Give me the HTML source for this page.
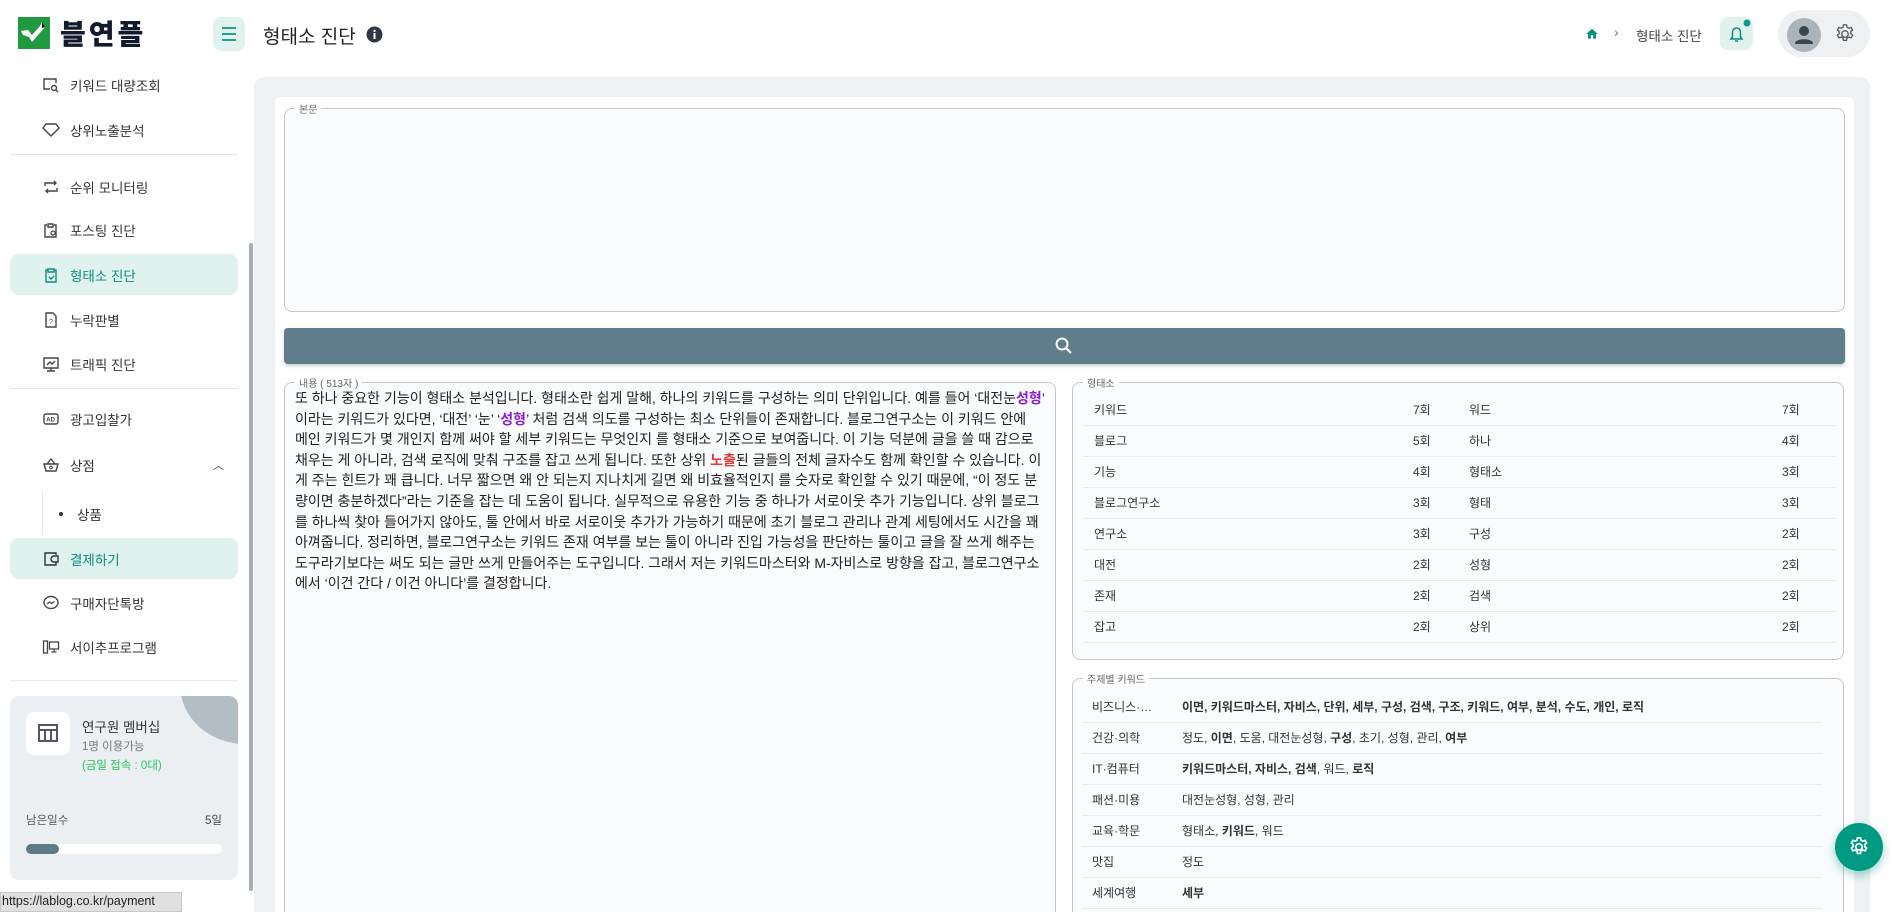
<!DOCTYPE html>
<html style="width:1890px;height:912px;overflow:hidden"><head><meta charset="utf-8">
<style>
*{box-sizing:border-box;margin:0;padding:0}
body{width:1890px;height:912px;overflow:hidden;background:#fff;font-family:"Liberation Sans","Noto Sans CJK KR",sans-serif;color:#222;position:relative}
.abs{position:absolute}
.nav{position:absolute;left:10px;width:228px;height:41px;display:flex;align-items:center;font-size:13.5px;color:#333;border-radius:9px}
.nav svg{position:absolute;left:32px;top:50%;transform:translateY(-50%)}
.nav span{position:absolute;left:60px}
.nav.act{background:#dff2ee;color:#0d8c7c}
.div{position:absolute;left:10px;width:228px;height:1px;background:#e6e8ea}
fieldset{position:absolute;border:1px solid #c4c7ca;border-radius:8px;background:#fafbfc}
legend{font-size:10px;color:#666;margin-left:10px;padding:0 4px}
.row{position:absolute;height:31px;border-bottom:1px solid #e8eaec;font-size:12px;color:#333;line-height:30px}
.txt{position:absolute;left:10px;top:-2px;font-size:14px;line-height:20.6px;color:#222;white-space:nowrap}
b{font-weight:700}
</style></head><body>
<div class="abs" style="left:18px;top:17px;width:32px;height:32px;background:#1f9a3e">
<svg width="32" height="32" viewBox="0 0 32 32"><path d="M3 14 L10 13 L14 18 L22 9 L24 5 L27 10 L21 17 L14 25 L11 20 L5 18Z" fill="#fff"/><path d="M24 5 L27 10 L24 11Z" fill="#111"/></svg></div>
<div class="abs" style="left:60px;top:13px;font-size:28px;font-weight:900;color:#121a2e;letter-spacing:3px">블연플</div>
<div class="abs" style="left:213px;top:17px;width:32px;height:34px;background:#dff2ee;border-radius:8px">
<svg width="32" height="34"><path d="M9 11h14M9 17h14M9 23h14" stroke="#2a9d8f" stroke-width="2"/></svg></div>
<div class="abs" style="left:263px;top:22px;font-size:19px;color:#222">형태소 진단</div>
<svg class="abs" style="left:366px;top:26px" width="17" height="17"><circle cx="8.5" cy="8.5" r="8" fill="#2d3748"/><rect x="7.5" y="7" width="2" height="6" fill="#fff"/><circle cx="8.5" cy="4.8" r="1.2" fill="#fff"/></svg>
<svg class="abs" style="left:1585px;top:27px" width="14" height="14" viewBox="0 0 24 24"><path d="M10 20v-6h4v6h5v-8h3L12 3 2 12h3v8z" fill="#0d8c7c"/></svg>
<div class="abs" style="left:1614px;top:24px;font-size:14px;color:#777">›</div>
<div class="abs" style="left:1636px;top:25px;font-size:13.5px;color:#444">형태소 진단</div>
<div class="abs" style="left:1720px;top:17px;width:33px;height:33px;background:#dff2ee;border-radius:8px">
<svg width="33" height="33" viewBox="0 0 33 33"><path d="M11 22h11l-1.5-2v-5a4 4 0 0 0-8 0v5z M15 24h3" fill="none" stroke="#0d8c7c" stroke-width="1.5"/><circle cx="27" cy="6" r="3.5" fill="#0d9a84"/></svg></div>
<div class="abs" style="left:1778px;top:10px;width:92px;height:47px;background:#eef0f2;border-radius:24px"></div>
<svg class="abs" style="left:1787px;top:18px" width="34" height="34"><circle cx="17" cy="17" r="17" fill="#aab4bb"/><circle cx="17" cy="13" r="5" fill="#3c4650"/><path d="M8 25c1-5 17-5 18 0v1H8z" fill="#3c4650"/></svg>
<svg class="abs" style="left:1834px;top:23px" width="22" height="22" viewBox="0 0 24 24"><path d="M12 8.5a3.5 3.5 0 1 0 0 7 3.5 3.5 0 0 0 0-7z M10.3 2h3.4l.5 2.6 1.9 1.1 2.5-.9 1.7 2.9-2 1.7v2.2l2 1.7-1.7 2.9-2.5-.9-1.9 1.1-.5 2.6h-3.4l-.5-2.6-1.9-1.1-2.5.9-1.7-2.9 2-1.7V9.4l-2-1.7 1.7-2.9 2.5.9 1.9-1.1z" fill="none" stroke="#555" stroke-width="1.4"/></svg>
<div class="nav" style="top:64px"><svg width="18" height="18" viewBox="0 0 18 18"><path d="M14 7V3H2v10h6" fill="none" stroke="#444" stroke-width="1.4"/><circle cx="12" cy="12" r="2.5" fill="none" stroke="#444" stroke-width="1.4"/><path d="M14 14l2 2" stroke="#444" stroke-width="1.4"/></svg><span>키워드 대량조회</span></div>
<div class="nav" style="top:109px"><svg width="18" height="18" viewBox="0 0 18 18"><path d="M4 3h10l3 4-8 8-8-8z" fill="none" stroke="#444" stroke-width="1.4"/></svg><span>상위노출분석</span></div>
<div class="div" style="top:154px"></div>
<div class="nav" style="top:166px"><svg width="18" height="18" viewBox="0 0 18 18"><path d="M3 8V5h11M12 3l2 2-2 2M15 10v3H4M6 15l-2-2 2-2" fill="none" stroke="#444" stroke-width="1.4"/></svg><span>순위 모니터링</span></div>
<div class="nav" style="top:209px"><svg width="18" height="18" viewBox="0 0 18 18"><path d="M12 4h2v12H3V4h2M6 3h5v3H6z" fill="none" stroke="#444" stroke-width="1.4"/><circle cx="11" cy="12" r="2" fill="none" stroke="#444" stroke-width="1.2"/></svg><span>포스팅 진단</span></div>
<div class="nav act" style="top:254px"><svg width="18" height="18" viewBox="0 0 18 18"><path d="M12 4h2v12H4V4h2M6 3h6v3H6zM7 11l2 2 3-3" fill="none" stroke="#0d8c7c" stroke-width="1.4"/></svg><span>형태소 진단</span></div>
<div class="nav" style="top:299px"><svg width="18" height="18" viewBox="0 0 18 18"><path d="M4 2h7l3 3v11H4z" fill="none" stroke="#444" stroke-width="1.4"/><text x="7" y="13" font-size="7" fill="#444">?</text></svg><span>누락판별</span></div>
<div class="nav" style="top:343px"><svg width="18" height="18" viewBox="0 0 18 18"><path d="M2 3h14v10H2zM5 16h8M9 13v3M5 10l3-3 2 2 3-3" fill="none" stroke="#444" stroke-width="1.4"/></svg><span>트래픽 진단</span></div>
<div class="div" style="top:388px"></div>
<div class="nav" style="top:398px"><svg width="18" height="18" viewBox="0 0 18 18"><rect x="2" y="4" width="14" height="10" rx="2" fill="none" stroke="#444" stroke-width="1.4"/><text x="4.3" y="11.5" font-size="6" font-weight="700" fill="#444">AD</text></svg><span>광고입찰가</span></div>
<div class="nav" style="top:444px"><svg width="18" height="18" viewBox="0 0 18 18"><path d="M2 8h14l-2 7H4zM5 8l4-5 4 5" fill="none" stroke="#444" stroke-width="1.4"/><circle cx="9" cy="11.5" r="1.3" fill="none" stroke="#444"/></svg><span>상점</span><span style="left:203px;font-size:11px">︿</span></div>
<div class="abs" style="left:42px;top:492px;width:1px;height:42px;background:#e3e5e7"></div>
<div class="abs" style="left:59px;top:512px;width:4px;height:4px;border-radius:2px;background:#333"></div>
<div class="abs" style="left:77px;top:504px;font-size:13.5px;color:#333">상품</div>
<div class="nav act" style="top:538px"><svg width="18" height="18" viewBox="0 0 18 18"><path d="M14 5V3H3v12h11v-3M14 6h2v6h-4a3 3 0 0 1 0-6z" fill="none" stroke="#333" stroke-width="1.4"/></svg><span>결제하기</span></div>
<div class="nav" style="top:582px"><svg width="18" height="18" viewBox="0 0 18 18"><ellipse cx="9" cy="8.5" rx="7" ry="6" fill="none" stroke="#444" stroke-width="1.4"/><path d="M5 10l2.5-2 2 1.5 3-2" fill="none" stroke="#444" stroke-width="1.2"/></svg><span>구매자단톡방</span></div>
<div class="nav" style="top:626px"><svg width="18" height="18" viewBox="0 0 18 18"><rect x="1.5" y="3" width="4" height="12" fill="none" stroke="#444" stroke-width="1.3"/><rect x="7.5" y="4" width="9" height="7" fill="none" stroke="#444" stroke-width="1.3"/><path d="M12 11v3M9.5 14h5" stroke="#444" stroke-width="1.3"/></svg><span>서이추프로그램</span></div>
<div class="div" style="top:680px"></div>
<div class="abs" style="left:10px;top:696px;width:228px;height:184px;background:#eceff1;border-radius:9px;overflow:hidden">
<div class="abs" style="left:170px;top:-70px;width:130px;height:118px;border-radius:50%;background:#b2bec3"></div>
<div class="abs" style="left:16px;top:16px;width:44px;height:43px;background:#fff;border-radius:8px"><svg width="44" height="43"><rect x="13" y="13" width="18" height="16" fill="none" stroke="#556" stroke-width="2"/><path d="M13 18h18M19 18v11M25 18v11" stroke="#556" stroke-width="2"/></svg></div>
<div class="abs" style="left:72px;top:20px;font-size:13.5px;color:#333">연구원 멤버십</div>
<div class="abs" style="left:72px;top:42px;font-size:11.5px;color:#777">1명 이용가능</div>
<div class="abs" style="left:72px;top:61px;font-size:11.5px;color:#22c55e">(금일 접속 : 0대)</div>
<div class="abs" style="left:16px;top:116px;font-size:11.5px;color:#555">남은일수</div>
<div class="abs" style="left:195px;top:116px;font-size:11.5px;color:#444">5일</div>
<div class="abs" style="left:16px;top:148px;width:196px;height:10px;background:#fff;border-radius:5px"><div style="width:33px;height:10px;background:#5d7a89;border-radius:5px"></div></div>
</div>
<div class="abs" style="left:249px;top:243px;width:4px;height:648px;background:#a7adb2;border-radius:2px"></div>
<div class="abs" style="left:0;top:892px;width:182px;height:20px;background:#e0e0e0;border:1px solid #c8c8c8;font-size:12.5px;color:#222;padding:1px 0 0 1px">https://lablog.co.kr/payment</div>
<div class="abs" style="left:254px;top:77px;width:1616px;height:835px;background:#eef0f2;border-radius:10px 10px 0 0"></div>
<div class="abs" style="left:275px;top:97px;width:1579px;height:815px;background:#fff;border-radius:6px 6px 0 0"></div>
<fieldset style="left:284px;top:101px;width:1561px;height:211px"><legend>본문</legend></fieldset>
<div class="abs" style="left:284px;top:328px;width:1561px;height:36px;background:#607d8b;border-radius:4px;box-shadow:0 2px 3px rgba(0,0,0,.2)">
<svg class="abs" style="left:770px;top:8px" width="20" height="20" viewBox="0 0 20 20"><circle cx="8" cy="8" r="5.5" fill="none" stroke="#fff" stroke-width="2"/><path d="M12 12l5 5" stroke="#fff" stroke-width="2.2"/></svg></div>
<fieldset style="left:284px;top:375px;width:772px;height:560px"><legend>내용 ( 513자 )</legend>
<div class="txt">또 하나 중요한 기능이 형태소 분석입니다. 형태소란 쉽게 말해, 하나의 키워드를 구성하는 의미 단위입니다. 예를 들어 ‘대전눈<b style="color:#8b1bd6">성형</b>’<br>이라는 키워드가 있다면, ‘대전’ ‘눈’ ‘<b style="color:#8b1bd6">성형</b>’ 처럼 검색 의도를 구성하는 최소 단위들이 존재합니다. 블로그연구소는 이 키워드 안에<br>메인 키워드가 몇 개인지 함께 써야 할 세부 키워드는 무엇인지 를 형태소 기준으로 보여줍니다. 이 기능 덕분에 글을 쓸 때 감으로<br>채우는 게 아니라, 검색 로직에 맞춰 구조를 잡고 쓰게 됩니다. 또한 상위 <b style="color:#e53935">노출</b>된 글들의 전체 글자수도 함께 확인할 수 있습니다. 이<br>게 주는 힌트가 꽤 큽니다. 너무 짧으면 왜 안 되는지 지나치게 길면 왜 비효율적인지 를 숫자로 확인할 수 있기 때문에, “이 정도 분<br>량이면 충분하겠다”라는 기준을 잡는 데 도움이 됩니다. 실무적으로 유용한 기능 중 하나가 서로이웃 추가 기능입니다. 상위 블로그<br>를 하나씩 찾아 들어가지 않아도, 툴 안에서 바로 서로이웃 추가가 가능하기 때문에 초기 블로그 관리나 관계 세팅에서도 시간을 꽤<br>아껴줍니다. 정리하면, 블로그연구소는 키워드 존재 여부를 보는 툴이 아니라 진입 가능성을 판단하는 툴이고 글을 잘 쓰게 해주는<br>도구라기보다는 써도 되는 글만 쓰게 만들어주는 도구입니다. 그래서 저는 키워드마스터와 M-자비스로 방향을 잡고, 블로그연구소<br>에서 ‘이건 간다 / 이건 아니다’를 결정합니다.</div>
</fieldset>
<fieldset style="left:1072px;top:375px;width:772px;height:285px"><legend>형태소</legend></fieldset>
<fieldset style="left:1072px;top:671px;width:772px;height:270px"><legend>주제별 키워드</legend></fieldset>
<div class="row" style="left:1083px;top:395px;width:752px"><span style="position:absolute;left:11px">키워드</span><span style="position:absolute;left:330px">7회</span><span style="position:absolute;left:386px">워드</span><span style="position:absolute;left:699px">7회</span></div>
<div class="row" style="left:1083px;top:426px;width:752px"><span style="position:absolute;left:11px">블로그</span><span style="position:absolute;left:330px">5회</span><span style="position:absolute;left:386px">하나</span><span style="position:absolute;left:699px">4회</span></div>
<div class="row" style="left:1083px;top:457px;width:752px"><span style="position:absolute;left:11px">기능</span><span style="position:absolute;left:330px">4회</span><span style="position:absolute;left:386px">형태소</span><span style="position:absolute;left:699px">3회</span></div>
<div class="row" style="left:1083px;top:488px;width:752px"><span style="position:absolute;left:11px">블로그연구소</span><span style="position:absolute;left:330px">3회</span><span style="position:absolute;left:386px">형태</span><span style="position:absolute;left:699px">3회</span></div>
<div class="row" style="left:1083px;top:519px;width:752px"><span style="position:absolute;left:11px">연구소</span><span style="position:absolute;left:330px">3회</span><span style="position:absolute;left:386px">구성</span><span style="position:absolute;left:699px">2회</span></div>
<div class="row" style="left:1083px;top:550px;width:752px"><span style="position:absolute;left:11px">대전</span><span style="position:absolute;left:330px">2회</span><span style="position:absolute;left:386px">성형</span><span style="position:absolute;left:699px">2회</span></div>
<div class="row" style="left:1083px;top:581px;width:752px"><span style="position:absolute;left:11px">존재</span><span style="position:absolute;left:330px">2회</span><span style="position:absolute;left:386px">검색</span><span style="position:absolute;left:699px">2회</span></div>
<div class="row" style="left:1083px;top:612px;width:752px"><span style="position:absolute;left:11px">잡고</span><span style="position:absolute;left:330px">2회</span><span style="position:absolute;left:386px">상위</span><span style="position:absolute;left:699px">2회</span></div>

<div class="row" style="left:1082px;top:692px;width:740px"><span style="position:absolute;left:10px">비즈니스·…</span><span style="position:absolute;left:100px"><b>이면, 키워드마스터, 자비스, 단위, 세부, 구성, 검색, 구조, 키워드, 여부, 분석, 수도, 개인, 로직</b></span></div>
<div class="row" style="left:1082px;top:723px;width:740px"><span style="position:absolute;left:10px">건강·의학</span><span style="position:absolute;left:100px">정도, <b>이면</b>, 도움, 대전눈성형, <b>구성</b>, 초기, 성형, 관리, <b>여부</b></span></div>
<div class="row" style="left:1082px;top:754px;width:740px"><span style="position:absolute;left:10px">IT·컴퓨터</span><span style="position:absolute;left:100px"><b>키워드마스터, 자비스, 검색</b>, 워드, <b>로직</b></span></div>
<div class="row" style="left:1082px;top:785px;width:740px"><span style="position:absolute;left:10px">패션·미용</span><span style="position:absolute;left:100px">대전눈성형, 성형, 관리</span></div>
<div class="row" style="left:1082px;top:816px;width:740px"><span style="position:absolute;left:10px">교육·학문</span><span style="position:absolute;left:100px">형태소, <b>키워드</b>, 워드</span></div>
<div class="row" style="left:1082px;top:847px;width:740px"><span style="position:absolute;left:10px">맛집</span><span style="position:absolute;left:100px">정도</span></div>
<div class="row" style="left:1082px;top:878px;width:740px"><span style="position:absolute;left:10px">세계여행</span><span style="position:absolute;left:100px"><b>세부</b></span></div>
<div class="abs" style="left:1835px;top:823px;width:48px;height:48px;border-radius:50%;background:#009a82;box-shadow:0 4px 10px rgba(0,150,130,.4)">
<svg class="abs" style="left:13px;top:13px" width="22" height="22" viewBox="0 0 24 24"><path d="M12 8.5a3.5 3.5 0 1 0 0 7 3.5 3.5 0 0 0 0-7z M10.3 2h3.4l.5 2.6 1.9 1.1 2.5-.9 1.7 2.9-2 1.7v2.2l2 1.7-1.7 2.9-2.5-.9-1.9 1.1-.5 2.6h-3.4l-.5-2.6-1.9-1.1-2.5.9-1.7-2.9 2-1.7V9.4l-2-1.7 1.7-2.9 2.5.9 1.9-1.1z" fill="none" stroke="#fff" stroke-width="1.8"/></svg></div>
</body></html>
